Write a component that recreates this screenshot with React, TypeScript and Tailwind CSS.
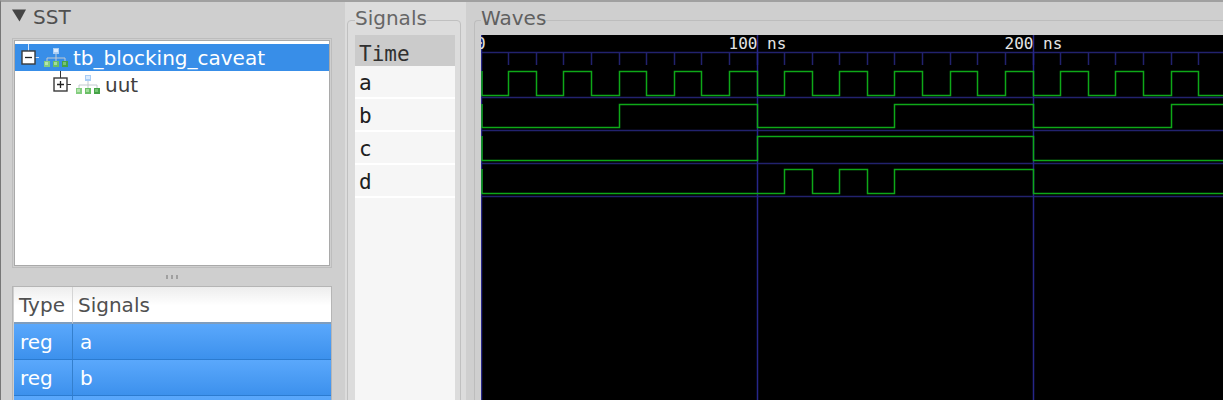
import React from "react";

const PX_PER_NS = 2.76;
const END_NS = 2000;

type Signal = { name: string; top: number; bottom: number; edges: number[] };

const clockEdges = Array.from({ length: END_NS / 10 }, (_, i) => (i + 1) * 10);
const slowEdges = Array.from({ length: END_NS / 50 }, (_, i) => (i + 1) * 50);
const rulerMarks = [100, 200];

// Every signal starts low and toggles at each listed time (ns).
const signals: Signal[] = [
  { name: "a", top: 36, bottom: 60, edges: clockEdges },
  { name: "b", top: 69, bottom: 92, edges: slowEdges },
  { name: "c", top: 101, bottom: 125, edges: [100, 200] },
  { name: "d", top: 134, bottom: 158, edges: [110, 120, 130, 140, 150, 200] },
];

const xAt = (ns: number) => Math.floor(ns * PX_PER_NS) + 0.5;

function wavePath({ top, bottom, edges }: Signal) {
  let high = false;
  let d = `M1 ${top}V${bottom + 0.5}`;
  edges.forEach((t) => {
    high = !high;
    d += `H${xAt(t)}V${(high ? top : bottom) + 0.5}`;
  });
  return d + `H${xAt(END_NS)}`;
}

function HierarchyIcon() {
  return (
    <svg width="26" height="22" viewBox="0 0 26 22" className="shrink-0" aria-hidden="true">
      <path d="M13 7v4M4 14v-3h18v3M13 11v3" fill="none" stroke="#c3cad0" strokeWidth="1" />
      <rect x="10" y="1" width="6" height="6" fill="#a9cdf5" />
      <rect x="11" y="2" width="4" height="3" fill="#dcecff" />
      <rect x="1" y="14" width="6" height="6" fill="#84cd80" />
      <rect x="2" y="15" width="3" height="3" fill="#b5e5ad" />
      <rect x="10" y="14" width="6" height="6" fill="#6abf66" />
      <rect x="11" y="15" width="3" height="3" fill="#a2dc9c" />
      <rect x="19" y="14" width="6" height="6" fill="#45a347" />
      <rect x="20" y="15" width="3" height="3" fill="#76c574" />
    </svg>
  );
}

function Expander({ open }: { open: boolean }) {
  return (
    <button type="button" aria-label={open ? "Collapse" : "Expand"} className="shrink-0">
      <svg width="20" height="27" viewBox="0 0 20 27" className="block">
        <path d="M9.5 0v7M16 13.5h4" stroke={open ? "#d5e6fa" : "#333"} />
        <rect x="3" y="7" width="13" height="13" fill="#fff" stroke="#3a3a3a" strokeWidth="1.4" />
        <path d={open ? "M6 13.5h7" : "M6 13.5h7M9.5 10v7"} stroke="#222" strokeWidth="1.3" />
      </svg>
    </button>
  );
}

export default function App() {
  return (
    <div className="flex h-screen overflow-hidden border-t-2 border-l border-t-[#a0a0a0] border-l-[#777] bg-[#cfcfcf] font-['DejaVu_Sans',sans-serif] text-[20px] text-[#505050]">
      <aside className="flex w-[344px] shrink-0 flex-col pr-[13px] pl-[11px]">
        <button type="button" className="flex h-9 shrink-0 items-start gap-[7px] pt-[3px] leading-6">
          <svg width="14" height="13" viewBox="0 0 14 13" className="mt-1" aria-hidden="true">
            <path d="M0 0.5h14L7.5 12.5z" fill="#444" />
          </svg>
          SST
        </button>
        <div className="h-[230px] shrink-0 border border-[#bdbdbd] p-px">
          <ul className="h-full border border-[#a9a9a9] bg-white pt-[3px]">
            <li className="flex h-[27px] items-center bg-[#388ee8] pl-1 leading-6 text-white">
              <Expander open />
              <span className="mr-1 ml-1">
                <HierarchyIcon />
              </span>
              tb_blocking_caveat
            </li>
            <li className="flex h-[27px] items-center pl-9 leading-6 text-[#404040]">
              <Expander open={false} />
              <span className="mr-1 ml-1">
                <HierarchyIcon />
              </span>
              uut
            </li>
          </ul>
        </div>
        <div className="flex h-[18px] shrink-0 items-center justify-center gap-[3px]">
          <i className="h-1 w-0.5 bg-[#a0a0a0]" />
          <i className="h-1 w-0.5 bg-[#a0a0a0]" />
          <i className="h-1 w-0.5 bg-[#a0a0a0]" />
        </div>
        <div className="min-h-0 flex-1 overflow-hidden border border-b-0 border-[#b5b5b5] pl-px">
          <table className="w-full table-fixed border-separate border-spacing-0 text-left">
            <thead>
              <tr className="h-[37px] bg-linear-to-b from-[#ededed] via-white to-white">
                <th className="w-[59px] border-r border-b-2 border-r-[#d5d5d5] border-b-[#7f9dbd] pl-[5px] font-normal">Type</th>
                <th className="border-b-2 border-[#7f9dbd] pl-[5px] font-normal">Signals</th>
              </tr>
            </thead>
            <tbody>
              {["a", "b", ""].map((name) => (
                <tr key={name} className="h-9 bg-linear-to-b from-[#5aa8fc] to-[#3b90ec] text-white">
                  <td className="border-r border-b border-r-[#347fcd] border-b-[#2b7bd0] pl-1.5">{name && "reg"}</td>
                  <td className="border-b border-[#2b7bd0] pl-[7px]">{name}</td>
                </tr>
              ))}
            </tbody>
          </table>
        </div>
      </aside>

      <section className="w-[121px] shrink-0 bg-[#dcdcdc] px-0.5 pt-1 pr-[5px]">
        <fieldset className="h-[440px] min-w-0 rounded-t-sm border border-[#c0c0c0] px-[7px] pr-[5px]">
          <legend className="pb-[5px] leading-6 text-[#666]">Signals</legend>
          <div className="h-full bg-[#f6f6f6] font-['DejaVu_Sans_Mono',monospace] text-[#202020]">
            <div className="h-[31px] bg-[#cbcbcb] pt-[5px] pl-1 text-[21px] leading-7 text-[#303030]">Time</div>
            {signals.map((s) => (
              <div key={s.name} className="h-[33px] border-b-2 border-white pt-[3px] pl-1 text-[21px] leading-7">
                {s.name}
              </div>
            ))}
          </div>
        </fieldset>
      </section>

      <section className="min-w-0 flex-1 pt-1 pl-2">
        <fieldset className="h-[440px] min-w-0 rounded-tl-sm border border-r-0 border-[#bdbdbd] pl-[6px]">
          <legend className="pb-[5px] leading-6 text-[#606060]">Waves</legend>
          <svg className="block h-full w-full bg-black" role="img" aria-label="Waveforms">
            <g stroke="#22226e" strokeWidth="1.5" fill="none">
              <path d="M0 17.5H9999" />
              {clockEdges.map((t) => (
                <path key={t} d={`M${xAt(t)} 18V30`} />
              ))}
              {[62, 95, 128, 161].map((y) => (
                <path key={y} d={`M0 ${y + 0.5}H9999`} />
              ))}
            </g>
            <g stroke="#262688" strokeWidth="1.5" fill="none">
              <path d="M0.5 0V9999" />
              {rulerMarks.map((t) => (
                <path key={t} d={`M${xAt(t)} 0V9999`} />
              ))}
            </g>
            <g stroke="#0ea818" strokeWidth="1.5" fill="none">
              {signals.map((s) => (
                <path key={s.name} d={wavePath(s)} />
              ))}
            </g>
            <g className="font-['DejaVu_Sans_Mono',monospace] text-[16px]" fill="#e4e4e4">
              <text x="-5" y="14">0</text>
              {rulerMarks.map((t) => (
                <text key={t} x={xAt(t) - 29} y="14">{`${t} ns`}</text>
              ))}
            </g>
          </svg>
        </fieldset>
      </section>
    </div>
  );
}
